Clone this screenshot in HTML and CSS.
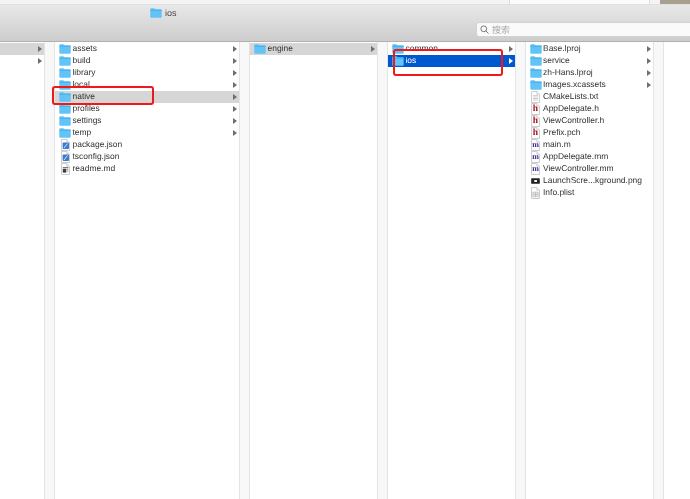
FILE: index.html
```html
<!DOCTYPE html>
<html lang="zh">
<head>
<meta charset="utf-8">
<title>ios</title>
<link rel="stylesheet" href="styles.css">
</head>
<body>
<svg class="defs" width="0" height="0" aria-hidden="true">
  <defs>
    <symbol id="folder" viewBox="0 0 12 10">
      <path d="M.3 1.2C.3.6.7.3 1.2.3h2.9c.5 0 .7.2 1 .5l.4.5h5.3c.6 0 .9.3.9.9v6.6c0 .6-.3.9-.9.9H1.2c-.6 0-.9-.3-.9-.9z" fill="#62c3f6"/>
      <path d="M.3 2.3h11.4" stroke="#3ea6e6" stroke-width=".7"/>
    </symbol>
    <symbol id="doc" viewBox="0 0 9 12">
      <path d="M.5.5h5.3L8.5 3.2v8.3h-8z" fill="#fdfdfd" stroke="#c0c0c0" stroke-width=".8"/>
      <path d="M5.8.5v2.7h2.7" fill="#eee" stroke="#c0c0c0" stroke-width=".6"/>
    </symbol>
    <symbol id="doc-lines" viewBox="0 0 9 12">
      <use href="#doc" width="9" height="12"/>
      <path d="M2 4.5h5M2 6h5M2 7.5h5M2 9h5" stroke="#bdbdbd" stroke-width=".7"/>
    </symbol>
    <symbol id="doc-plist" viewBox="0 0 9 12">
      <use href="#doc" width="9" height="12"/>
      <path d="M1.8 5.2h5.4v4.6H1.8zM1.8 7.5h5.4M4.5 5.2v4.6" fill="#e8e8e8" stroke="#b0b0b0" stroke-width=".6"/>
    </symbol>
    <symbol id="doc-ts" viewBox="0 0 9 12">
      <use href="#doc" width="9" height="12"/>
      <rect x="1.6" y="3.4" width="6.4" height="6.6" rx="1" fill="#3a7ad6"/>
      <path d="M3 9 6.4 4.6" stroke="#fff" stroke-width=".8"/>
    </symbol>
    <symbol id="doc-md" viewBox="0 0 9 12">
      <use href="#doc" width="9" height="12"/>
      <path d="M1.8 4h5.6v1.2H1.8z" fill="#777"/>
      <path d="M1.8 5.8h3.4v3.8H1.8z" fill="#3c3c3c"/>
      <path d="M5.6 6.4h1.8M5.6 8.2h1.8" stroke="#777" stroke-width=".8"/>
    </symbol>
    <symbol id="doc-png" viewBox="0 0 9 6">
      <rect x=".2" y=".2" width="8.6" height="5.6" rx=".6" fill="#222"/>
      <rect x="3.2" y="2" width="2.8" height="2" fill="#eee"/>
    </symbol>
  </defs>
</svg>

<header class="toolbar">
  <div class="titlebar-strip">
    <span class="strip-a"></span><span class="strip-b"></span><span class="strip-c"></span><span class="strip-photo"></span>
  </div>
  <div class="toolbar-main">
    <div class="title"><svg class="ico"><use href="#folder"/></svg><span>ios</span></div>
    <div class="search">
      <svg class="lens" viewBox="0 0 10 10"><circle cx="4.2" cy="4.2" r="3.2"/><path d="M6.6 6.6 9.4 9.4"/></svg>
      <span>搜索</span>
    </div>
  </div>
</header>

<main class="browser">
  <section class="col col-0">
    <div class="row sel-gray"><i class="arrow"></i></div>
    <div class="row"><i class="arrow"></i></div>
  </section>

  <section class="col col-1">
    <div class="row"><svg class="ico"><use href="#folder"/></svg><span class="name">assets</span><i class="arrow"></i></div>
    <div class="row"><svg class="ico"><use href="#folder"/></svg><span class="name">build</span><i class="arrow"></i></div>
    <div class="row"><svg class="ico"><use href="#folder"/></svg><span class="name">library</span><i class="arrow"></i></div>
    <div class="row"><svg class="ico"><use href="#folder"/></svg><span class="name">local</span><i class="arrow"></i></div>
    <div class="row sel-gray"><svg class="ico"><use href="#folder"/></svg><span class="name">native</span><i class="arrow"></i></div>
    <div class="row"><svg class="ico"><use href="#folder"/></svg><span class="name">profiles</span><i class="arrow"></i></div>
    <div class="row"><svg class="ico"><use href="#folder"/></svg><span class="name">settings</span><i class="arrow"></i></div>
    <div class="row"><svg class="ico"><use href="#folder"/></svg><span class="name">temp</span><i class="arrow"></i></div>
    <div class="row"><svg class="ico-doc"><use href="#doc-ts"/></svg><span class="name">package.json</span></div>
    <div class="row"><svg class="ico-doc"><use href="#doc-ts"/></svg><span class="name">tsconfig.json</span></div>
    <div class="row"><svg class="ico-doc"><use href="#doc-md"/></svg><span class="name">readme.md</span></div>
  </section>

  <section class="col col-2">
    <div class="row sel-gray"><svg class="ico"><use href="#folder"/></svg><span class="name">engine</span><i class="arrow"></i></div>
  </section>

  <section class="col col-3">
    <div class="row"><svg class="ico"><use href="#folder"/></svg><span class="name">common</span><i class="arrow"></i></div>
    <div class="row sel-blue"><svg class="ico"><use href="#folder"/></svg><span class="name">ios</span><i class="arrow"></i></div>
  </section>

  <section class="col col-4">
    <div class="row"><svg class="ico"><use href="#folder"/></svg><span class="name">Base.lproj</span><i class="arrow"></i></div>
    <div class="row"><svg class="ico"><use href="#folder"/></svg><span class="name">service</span><i class="arrow"></i></div>
    <div class="row"><svg class="ico"><use href="#folder"/></svg><span class="name">zh-Hans.lproj</span><i class="arrow"></i></div>
    <div class="row"><svg class="ico"><use href="#folder"/></svg><span class="name">Images.xcassets</span><i class="arrow"></i></div>
    <div class="row"><svg class="ico-doc"><use href="#doc-lines"/></svg><span class="name">CMakeLists.txt</span></div>
    <div class="row"><svg class="ico-doc"><use href="#doc"/></svg><b class="letter letter-h">h</b><span class="name">AppDelegate.h</span></div>
    <div class="row"><svg class="ico-doc"><use href="#doc"/></svg><b class="letter letter-h">h</b><span class="name">ViewController.h</span></div>
    <div class="row"><svg class="ico-doc"><use href="#doc"/></svg><b class="letter letter-h">h</b><span class="name">Prefix.pch</span></div>
    <div class="row"><svg class="ico-doc"><use href="#doc"/></svg><b class="letter letter-m">m</b><span class="name">main.m</span></div>
    <div class="row"><svg class="ico-doc"><use href="#doc"/></svg><b class="letter letter-m">m</b><span class="name">AppDelegate.mm</span></div>
    <div class="row"><svg class="ico-doc"><use href="#doc"/></svg><b class="letter letter-m">m</b><span class="name">ViewController.mm</span></div>
    <div class="row"><svg class="ico-png"><use href="#doc-png"/></svg><span class="name">LaunchScre...kground.png</span></div>
    <div class="row"><svg class="ico-doc"><use href="#doc-plist"/></svg><span class="name">Info.plist</span></div>
  </section>

  <section class="col col-5"></section>
</main>

<div class="callout callout-native"></div>
<div class="callout callout-ios"></div>
</body>
</html>
```

FILE: styles.css
```css
* { box-sizing: border-box; }
html, body { margin: 0; height: 100%; }
body {
  position: relative;
  width: 690px;
  height: 499px;
  overflow: hidden;
  background: #fff;
  font-family: "Liberation Sans", "Noto Sans CJK SC", sans-serif;
  font-size: 8.45px;
  color: #333;
  text-rendering: geometricPrecision;
  display: flex;
  flex-direction: column;
}
.defs { position: absolute; }

.toolbar { height: 42px; flex: none; display: flex; flex-direction: column; border-bottom: 1px solid #b0b0b0; filter: blur(.3px); }
.titlebar-strip { height: 5px; flex: none; display: flex; background: #f4f4f4; border-bottom: 1px solid #e0e0e0; }
.strip-a { width: 509px; }
.strip-b { width: 141px; background: #fbfbfb; border-left: 1px solid #dcdcdc; border-right: 1px solid #dcdcdc; }
.strip-c { width: 10px; }
.strip-photo { flex: 1; background: #a8a08f; }
.toolbar-main {
  flex: 1;
  position: relative;
  background: linear-gradient(#e8e8e8, #cdcdcd);
}
.title { display: flex; align-items: center; gap: 3px; padding: 3px 0 0 150px; font-size: 9px; color: #444; }
.search {
  position: absolute;
  left: 476px;
  top: 17px;
  right: -4px;
  height: 15px;
  display: flex;
  align-items: center;
  gap: 3px;
  padding-left: 3px;
  background: #fafafa;
  border: 1px solid #d2d2d2;
  border-radius: 3px;
  font-size: 9px;
  color: #a4a4a4;
}
.lens { width: 9px; height: 9px; fill: none; stroke: #777; stroke-width: 1.1; }

.browser { flex: 1; display: flex; min-height: 0; background: #f8f8f8; filter: blur(.3px); }
.col { flex: none; padding-top: 1px; background: #fff; }
.col-0 { width: 45px; border-right: 1px solid #e4e4e4; }
.col-1, .col-2, .col-3, .col-4 { margin-left: 9px; border-left: 1px solid #e4e4e4; border-right: 1px solid #e4e4e4; }
.col-1 { width: 186px; }
.col-2, .col-3, .col-4 { width: 129px; }
.col-5 { flex: 1; margin-left: 9px; border-left: 1px solid #e4e4e4; }

.row { height: 12px; display: flex; align-items: center; padding: 0 2px 0 4px; position: relative; white-space: nowrap; }
.col-4 .row { padding-left: 3.5px; }
.ico { width: 12px; height: 10px; flex: none; }
.ico-doc { width: 9px; height: 12px; margin: 0 1.5px; flex: none; }
.ico-png { width: 9px; height: 6px; margin: 0 1.5px; flex: none; }
.name { margin: -2px 0 0 1.5px; flex: 1; line-height: 12px; }
.arrow { width: 0; height: 0; margin-left: auto; border-left: 4.5px solid #6e6e6e; border-top: 3px solid transparent; border-bottom: 3px solid transparent; }
.sel-gray { background: #d6d6d6; }
.sel-blue { background: #0058d0; color: #fff; }
.sel-blue .arrow { border-left-color: #fff; }

.letter { position: absolute; left: 3.5px; width: 12px; text-align: center; }
.letter-h { font: bold 9.5px/13px "Liberation Serif", serif; color: #a3162a; }
.letter-m { font: bold 8px/14px "Liberation Serif", serif; color: #3b2a8f; }

.callout { position: absolute; border: 2px solid #f01818; border-radius: 3px; }
.callout-native { left: 52px; top: 86px; width: 102px; height: 19px; }
.callout-ios { left: 393px; top: 49px; width: 110px; height: 27px; }
```
